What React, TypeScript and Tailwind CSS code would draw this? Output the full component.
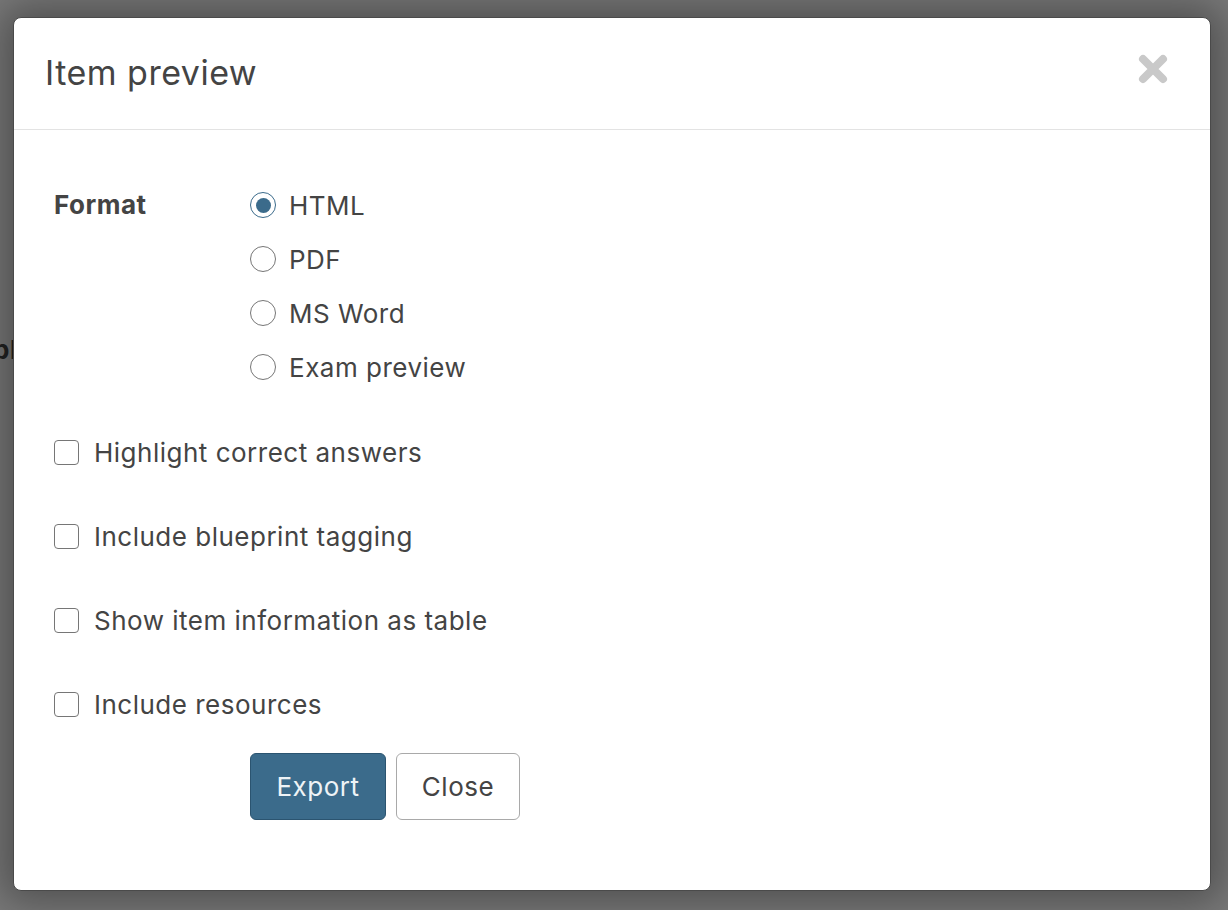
import React, { useState } from 'react';

const formats = ['HTML', 'PDF', 'MS Word', 'Exam preview'];
const options = [
  'Highlight correct answers',
  'Include blueprint tagging',
  'Show item information as table',
  'Include resources',
];

const Radio: React.FC<{ checked: boolean }> = ({ checked }) => (
  <span
    className={`flex h-[26px] w-[26px] shrink-0 items-center justify-center rounded-full border-[1.5px] bg-white ${
      checked ? 'border-[#3b6b8b]' : 'border-[#767676]'
    }`}
  >
    {checked && <span className="h-[15px] w-[15px] rounded-full bg-[#3b6b8b]" />}
  </span>
);

const Checkbox: React.FC = () => (
  <span className="h-[25px] w-[25px] shrink-0 rounded-[4px] border-[1.5px] border-[#767676] bg-white" />
);

export default function App() {
  const [format, setFormat] = useState('HTML');

  return (
    <div className="relative h-[910px] w-[1228px] overflow-hidden bg-[#7a7a7a] pl-[13px] pt-[17px] font-['Inter',sans-serif] tracking-[0.5px] text-[#444]">
      {/* page text behind the overlay */}
      <span className="absolute left-[-7px] top-[337px] text-[26px] font-bold leading-none text-[#222]">bl</span>

      <div className="relative flex h-[874px] w-[1198px] flex-col rounded-[8px] border border-[#4a4a4a] bg-white shadow-[0_0_40px_12px_rgba(0,0,0,0.35)]">
        {/* Header */}
        <div className="flex h-[112px] shrink-0 items-center justify-between border-b border-[#e3e3e3] pl-[31px] pr-[42px]">
          <h2 className="pb-[2px] text-[34px] leading-none text-[#444]">Item preview</h2>
          <button className="mb-[10px] text-[#c9c9c9]">
            <svg width="30" height="30" viewBox="0 0 30 30">
              <path d="M5 5 L25 25 M25 5 L5 25" stroke="currentColor" strokeWidth="8" strokeLinecap="round" />
            </svg>
          </button>
        </div>

        {/* Body */}
        <div className="flex flex-col pl-[40px] pt-[48px]">
          <div className="flex">
            <div className="w-[196px] shrink-0 pt-[14px] text-[26px] font-bold leading-none text-[#444]">Format</div>
            <div className="flex flex-col">
              {formats.map((f) => (
                <label
                  key={f}
                  onClick={() => setFormat(f)}
                  className="flex h-[54px] cursor-pointer items-center gap-[13px] text-[26px]"
                >
                  <Radio checked={format === f} />
                  <span>{f}</span>
                </label>
              ))}
            </div>
          </div>

          <div className="mt-[31px] flex flex-col gap-[30px]">
            {options.map((o) => (
              <label key={o} className="flex h-[54px] cursor-pointer items-center gap-[15px] text-[26px]">
                <Checkbox />
                <span>{o}</span>
              </label>
            ))}
          </div>

          <div className="ml-[196px] mt-[22px] flex gap-[10px]">
            <button className="h-[67px] w-[136px] rounded-[6px] border-[1.5px] border-[#2b5470] bg-[#3b6b8b] text-[26px] text-[#eef3f6]">
              Export
            </button>
            <button className="h-[67px] w-[124px] rounded-[6px] border-[1.5px] border-[#a9a9a9] bg-white text-[26px] text-[#444]">
              Close
            </button>
          </div>
        </div>
      </div>
    </div>
  );
}
